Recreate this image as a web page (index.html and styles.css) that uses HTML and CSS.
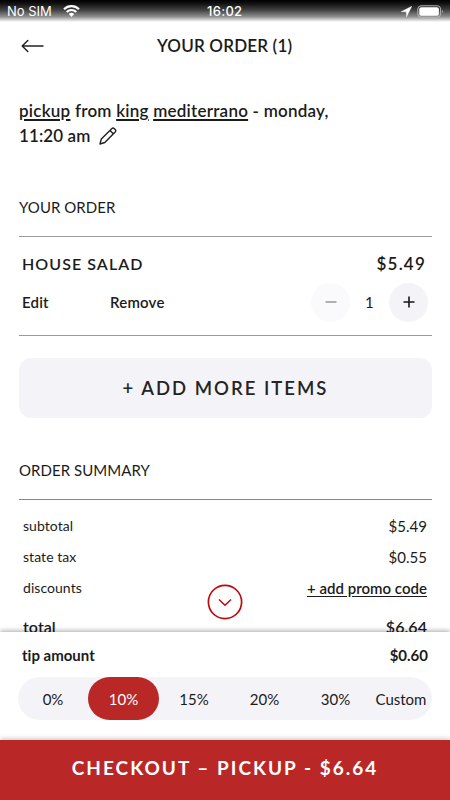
FILE: index.html
```
<!DOCTYPE html>
<html lang="en">
<head>
<meta charset="utf-8">
<title>Your order</title>
<link rel="stylesheet" href="styles.css">
</head>
<body>
<div class="screen">
  <div class="status">
    <span class="carrier">No SIM</span>
    <svg class="wifi" width="17" height="12" viewBox="0 0 17 12" fill="none" stroke="#fff" stroke-width="2.1"><path d="M1 4.2a10.7 10.7 0 0 1 15 0M3.7 7a6.9 6.9 0 0 1 9.6 0"/><path d="M5.8 9.1a3.9 3.9 0 0 1 5.4 0L8.500 12z" fill="#fff" stroke="none"/></svg>
    <span class="clock">16:02</span>
    <svg class="location" width="11" height="11" viewBox="0 0 11 11"><path d="M.2 5.800 10.800.2 5.600 10.800 5.200 5.800z" fill="#fff" stroke="#fff" stroke-width=".4"/></svg>
    <svg class="battery" width="27" height="13" viewBox="0 0 27 13"><rect x=".8" y=".8" width="22.800" height="11.400" rx="3.300" fill="none" stroke="#b4b4b4" stroke-width="1"/><rect x="2.300" y="2.300" width="19.600" height="8.400" rx="2" fill="#fff"/><path d="M25 4.600q1.600 1.900 0 3.800z" fill="#bbb"/></svg>
  </div>
  <header class="topbar">
    <svg class="back" width="24" height="14" viewBox="0 0 24 14" fill="none" stroke="#222" stroke-width="1.500" stroke-linecap="round" stroke-linejoin="round"><path d="M22 7H1.200M6.800 1.500 1.200 7l5.600 5.500"/></svg>
    <h1 class="title">YOUR ORDER (1)</h1>
  </header>
  <main class="content">
    <p class="pickup"><span class="line1"><u>pickup</u> from <u>king</u> <u>mediterrano</u> - monday,</span><br><span class="line2">11:20 am</span><svg class="pencil" width="18" height="18" viewBox="0 0 18 18" fill="none" stroke="#222" stroke-width="1.400" stroke-linejoin="round"><path d="M1 17 2.300 12 12.700 1.700q1.300-1.200 2.700 0l.8.8q1.100 1.300 0 2.500L5.800 15.500zM11 3.400l3.500 3.500"/></svg></p>
    <h2 class="section">YOUR ORDER</h2>
    <section class="item">
      <div class="item-row"><span class="name">HOUSE SALAD</span><span class="price">$5.49</span></div>
      <div class="actions">
        <span class="edit">Edit</span><span class="remove">Remove</span>
        <div class="stepper">
          <span class="round off"><svg width="12" height="12" viewBox="0 0 12 12"><path d="M.5 6h11" stroke="#909092" stroke-width="1.400"/></svg></span>
          <span class="count">1</span>
          <span class="round"><svg width="12" height="12" viewBox="0 0 12 12"><path d="M.5 6h11M6 .5v11" stroke="#161616" stroke-width="1.600"/></svg></span>
        </div>
      </div>
    </section>
    <div class="add"><span>+ ADD MORE ITEMS</span></div>
    <h2 class="section summary-title">ORDER SUMMARY</h2>
    <section class="summary">
      <div class="line"><span class="subtotal">subtotal</span><span>$5.49</span></div>
      <div class="line"><span class="tax">state tax</span><span>$0.55</span></div>
      <div class="line"><span class="discounts">discounts</span><span class="promo">+ add promo code</span></div>
      <div class="line total"><span>total</span><span>$6.64</span></div>
    </section>
    <svg class="more" width="36" height="36" viewBox="0 0 36 36" fill="none" stroke="#bd080d"><circle cx="18" cy="18" r="16.600" fill="#fff" stroke-width="1.700"/><path d="m12 15.500 6 5.700 6-5.700" stroke-width="1.500"/></svg>
  </main>
  <section class="tip">
    <div class="tip-row"><span class="tip-label">tip amount</span><span>$0.60</span></div>
    <div class="tips"><span>0%</span><span class="active">10%</span><span>15%</span><span>20%</span><span>30%</span><span class="custom">Custom</span></div>
  </section>
  <footer class="checkout"><span>CHECKOUT – PICKUP - $6.64</span></footer>
</div>
</body>
</html>
```
FILE: styles.css
```
* { box-sizing: border-box; }
body { margin: 0; font-family: Lato, sans-serif; font-variant-ligatures: none; color: #1b1b1b; background: #fff; }
h1, h2, p { margin: 0; }
svg { display: block; flex: none; }
.screen { width: 450px; height: 800px; display: flex; flex-direction: column; overflow: hidden; }
.status { height: 22px; flex: none; display: grid; grid-template-columns: 56px 148px 1fr auto auto; align-items: center; padding: 0 6px 0 7px; color: #fff; font: 400 13px/20px Inter, sans-serif; background: linear-gradient(#000 0, #101010 15%, #404040 45%, #8c8c8c 75%, #fff 100%); }
.carrier { white-space: nowrap; }
.clock { font-weight: 500; letter-spacing: .3px; margin-left: -4px; }
.location { margin-right: 5px; }
.topbar { height: 48px; flex: none; display: grid; grid-template-columns: 136px 1fr; align-items: center; padding: 0 0 0 21px; }
.title { font-size: 17px; line-height: 20px; font-weight: 600; letter-spacing: .18px; white-space: nowrap; }
.content { flex: 1; min-height: 0; overflow: hidden; position: relative; padding: 28px 18px 0 19px; }
.pickup { font-size: 17px; line-height: 25px; font-weight: 600; letter-spacing: .24px; height: 99px; white-space: nowrap; }
.pickup u { text-decoration-thickness: 2px; text-underline-offset: 2px; }
.line2 { letter-spacing: .1px; }
.pencil { display: inline-block; vertical-align: -3px; margin-left: 9px; }
.section { height: 39px; line-height: 20px; font-size: 15px; font-weight: 400; letter-spacing: .05px; }
.item { height: 100px; border-top: 1px solid #999; border-bottom: 1px solid #999; padding: 15px 4px 0 3px; }
.item-row { display: flex; justify-content: space-between; line-height: 24px; font-size: 17px; font-weight: 600; letter-spacing: 1.200px; padding-right: 2px; }
.name { font-size: 16px; letter-spacing: 1.060px; line-height: 23px; }
.actions { display: flex; align-items: center; height: 52px; font-size: 15px; font-weight: 600; letter-spacing: .2px; }
.edit { width: 88px; }
.stepper { margin-left: auto; display: flex; align-items: center; }
.round { width: 39px; height: 39px; border-radius: 50%; background: #f4f3f8; display: grid; place-items: center; }
.off { background: #fafafc; }
.count { width: 39px; text-align: center; font-weight: 400; }
.add { margin-top: 22px; height: 60px; border-radius: 12px; background: #f4f3f8; font-size: 18.500px; line-height: 60px; text-align: center; font-weight: 600; letter-spacing: 2px; color: #242424; }
.summary-title { margin-top: 42px; height: 39px; }
.summary { border-top: 1px solid #888; padding: 11px 5px 0 4px; }
.line { display: flex; justify-content: space-between; height: 31px; line-height: 30px; font-size: 14px; letter-spacing: .05px; }
.line span:last-child { font-size: 15px; }
.line .promo { font-weight: 600; text-decoration: underline; text-underline-offset: 2px; font-size: 15px; letter-spacing: .02px; }
.total { margin-top: 8px; font-weight: 600; }
.line.total span { font-size: 16px; }
.more { position: absolute; left: 207px; top: 514px; }
.tip { height: 108px; flex: none; background: #fff; position: relative; box-shadow: 0 -1px 5px rgba(0,0,0,.35); padding: 11px 18px 0; }
.tip-row { display: flex; justify-content: space-between; padding: 0 4px; font-size: 15px; line-height: 24px; font-weight: 700; }
.tips { margin-top: 10px; height: 43px; border-radius: 22px; background: #f4f3f8; display: grid; grid-template-columns: 70px 71px 70px 71px 71px 60px; align-items: center; text-align: center; font-size: 15px; }
.active { height: 43px; line-height: 44px; border-radius: 22px; background: #b92826; color: #fff; }
.checkout { height: 60px; flex: none; position: relative; background: #b92826; box-shadow: 0 -1px 5px rgba(0,0,0,.25); color: #fff; text-align: center; line-height: 56px; font-size: 19px; font-weight: 700; letter-spacing: 2px; }
```
